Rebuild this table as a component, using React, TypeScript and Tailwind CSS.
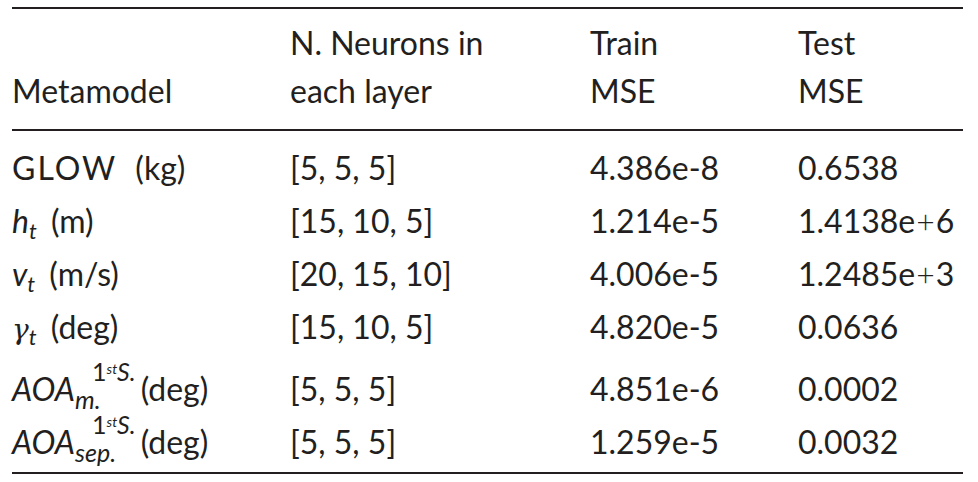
import React from "react";

type Row = {
  label: React.ReactNode;
  neurons: string;
  train: string;
  test: React.ReactNode;
  gap?: boolean;
};

const Sym = ({ base, sub, serif }: { base: string; sub: string; serif?: boolean }) => (
  <span className="italic">
    <span className={serif ? "font-['DejaVu_Serif',serif] text-[28px]" : ""}>{base}</span>
    <span className="text-[22px] align-[-6px]">{sub}</span>
  </span>
);

const Aoa = ({ sub }: { sub: string }) => (
  <span className="italic">
    AOA
    <span className="inline-flex flex-col items-start leading-none align-[20px] -mt-[6px]">
      <span className="text-[25px] pl-[17px] whitespace-nowrap">
        <span className="not-italic">1</span>
        <span className="text-[14px] align-[7px]">st</span>
        <span>S.</span>
      </span>
      <span className="text-[25px] mt-[3px]">{sub}</span>
    </span>
  </span>
);

const Plus = ({ a, b }: { a: string; b: string }) => (
  <>
    {a}
    <span className="font-light mx-[1px]">+</span>
    {b}
  </>
);

const rows: Row[] = [
  {
    label: <><span className="tracking-[2px]">GLOW</span> <span className="ml-[10px]">(kg)</span></>,
    neurons: "[5, 5, 5]",
    train: "4.386e-8",
    test: "0.6538",
  },
  {
    label: <><Sym base="h" sub="t" /> <span className="ml-[6px]">(m)</span></>,
    neurons: "[15, 10, 5]",
    train: "1.214e-5",
    test: <Plus a="1.4138e" b="6" />,
  },
  {
    label: <><Sym base="v" sub="t" /> <span className="ml-[6px]">(m/s)</span></>,
    neurons: "[20, 15, 10]",
    train: "4.006e-5",
    test: <Plus a="1.2485e" b="3" />,
  },
  {
    label: <><Sym base="γ" sub="t" serif /> <span className="ml-[6px]">(deg)</span></>,
    neurons: "[15, 10, 5]",
    train: "4.820e-5",
    test: "0.0636",
  },
  {
    label: <><Aoa sub="m." /><span className="ml-[5px]">(deg)</span></>,
    neurons: "[5, 5, 5]",
    train: "4.851e-6",
    test: "0.0002",
    gap: true,
  },
  {
    label: <><Aoa sub="sep." /><span className="ml-[5px]">(deg)</span></>,
    neurons: "[5, 5, 5]",
    train: "1.259e-5",
    test: "0.0032",
  },
];

const cols = "grid grid-cols-[278px_300px_208px_165px]";

export default function App() {
  return (
    <div className="w-[978px] h-[482px] bg-white pt-[7px] px-3 font-['Lato',sans-serif] text-[32px] text-[#231f20]">
      <div className="w-[951px] border-t-2 border-b-2 border-[#231f20]">
        <div className={`${cols} items-end leading-[48px] pt-[10px] pb-[14px] border-b-2 border-[#231f20]`}>
          <div>Metamodel</div>
          <div>
            N. Neurons in
            <br />
            each layer
          </div>
          <div>
            Train
            <br />
            MSE
          </div>
          <div>
            Test
            <br />
            MSE
          </div>
        </div>
        <div className="pt-[10px] pb-[4px]">
          {rows.map((r, i) => (
            <div
              key={i}
              className={`${cols} h-[53px] leading-[53px] whitespace-nowrap ${r.gap ? "mt-[9px]" : ""}`}
            >
              <div>{r.label}</div>
              <div>{r.neurons}</div>
              <div>{r.train}</div>
              <div>{r.test}</div>
            </div>
          ))}
        </div>
      </div>
    </div>
  );
}
